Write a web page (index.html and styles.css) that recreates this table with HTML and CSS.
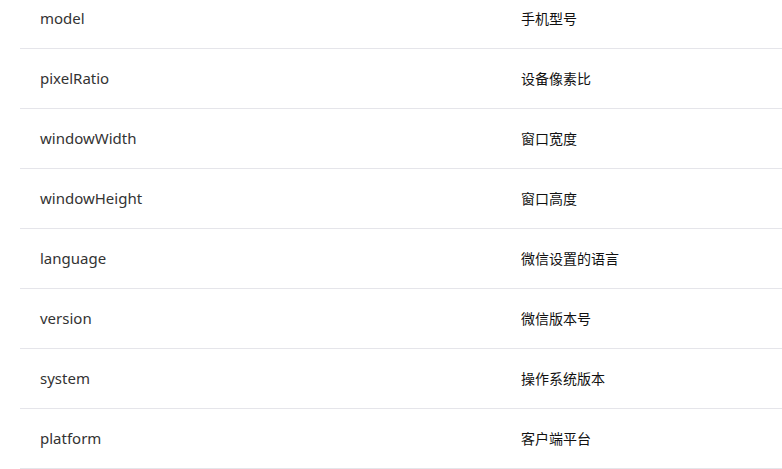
FILE: index.html
```html
<!DOCTYPE html>
<html>
<head>
<meta charset="utf-8">
<link rel="stylesheet" href="styles.css">
</head>
<body>
<div class="list">
  <div class="row"><div class="key">model</div><div class="val">手机型号</div></div>
  <div class="row"><div class="key">pixelRatio</div><div class="val">设备像素比</div></div>
  <div class="row"><div class="key">windowWidth</div><div class="val">窗口宽度</div></div>
  <div class="row"><div class="key">windowHeight</div><div class="val">窗口高度</div></div>
  <div class="row"><div class="key">language</div><div class="val">微信设置的语言</div></div>
  <div class="row"><div class="key">version</div><div class="val">微信版本号</div></div>
  <div class="row"><div class="key">system</div><div class="val">操作系统版本</div></div>
  <div class="row"><div class="key">platform</div><div class="val">客户端平台</div></div>
</div>
</body>
</html>
```
FILE: styles.css
```css
html, body {
  margin: 0;
  padding: 0;
  background: #fff;
  overflow: hidden;
}
.list {
  margin-top: -11px;
  padding-left: 20px;
  font-family: "Noto Sans", "Noto Sans CJK SC", sans-serif;
}
.row {
  box-sizing: border-box;
  display: grid;
  grid-template-columns: 481px 1fr;
  height: 60px;
  padding-bottom: 2px;
  align-items: center;
  border-bottom: 1px solid #e5e5ea;
}
.key {
  padding-left: 20px;
  font-size: 15px;
  color: #333;
}
.val {
  padding-left: 20px;
  font-size: 14px;
  color: #111;
}
```
